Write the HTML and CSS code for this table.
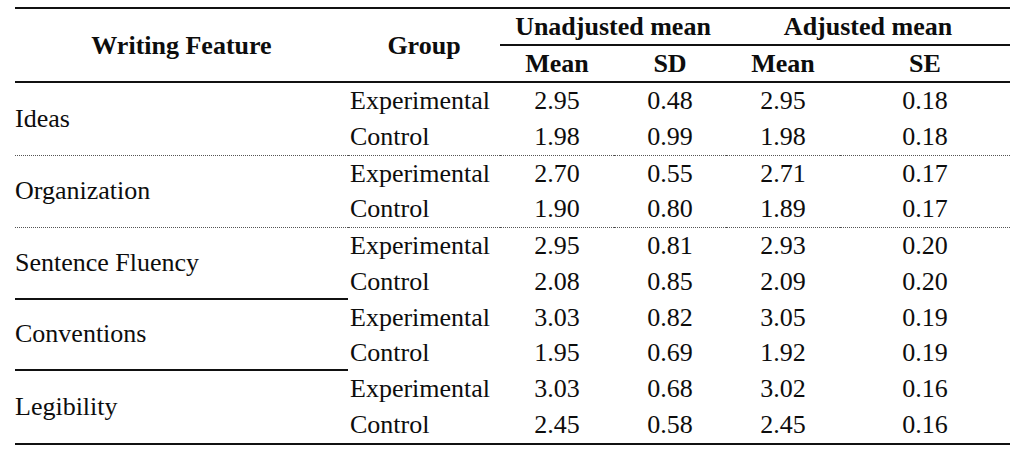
FILE: index.html
```html
<!DOCTYPE html>
<html lang="en">
<head>
<meta charset="utf-8">
<title>Writing Feature Means</title>
<link rel="stylesheet" href="styles.css">
</head>
<body>
<div class="wrap">
<table class="stats">
  <colgroup>
    <col class="c-feat">
    <col class="c-group">
    <col class="c-mean1">
    <col class="c-sd">
    <col class="c-mean2">
    <col class="c-se">
  </colgroup>
  <thead>
    <tr class="hrow1">
      <th rowspan="2" class="hspan">Writing Feature</th>
      <th rowspan="2" class="hspan">Group</th>
      <th colspan="2" class="hgroup">Unadjusted mean</th>
      <th colspan="2" class="hgroup">Adjusted mean</th>
    </tr>
    <tr class="hrow2">
      <th class="hsub">Mean</th>
      <th class="hsub">SD</th>
      <th class="hsub">Mean</th>
      <th class="hsub">SE</th>
    </tr>
  </thead>
  <tbody>
    <tr>
      <td rowspan="2" class="feat sep-dot">Ideas</td>
      <td class="grp">Experimental</td><td>2.95</td><td>0.48</td><td>2.95</td><td>0.18</td>
    </tr>
    <tr class="dot">
      <td class="grp">Control</td><td>1.98</td><td>0.99</td><td>1.98</td><td>0.18</td>
    </tr>
    <tr>
      <td rowspan="2" class="feat sep-dot">Organization</td>
      <td class="grp">Experimental</td><td>2.70</td><td>0.55</td><td>2.71</td><td>0.17</td>
    </tr>
    <tr class="dot">
      <td class="grp">Control</td><td>1.90</td><td>0.80</td><td>1.89</td><td>0.17</td>
    </tr>
    <tr>
      <td rowspan="2" class="feat sep-solid">Sentence Fluency</td>
      <td class="grp">Experimental</td><td>2.95</td><td>0.81</td><td>2.93</td><td>0.20</td>
    </tr>
    <tr>
      <td class="grp">Control</td><td>2.08</td><td>0.85</td><td>2.09</td><td>0.20</td>
    </tr>
    <tr>
      <td rowspan="2" class="feat sep-solid">Conventions</td>
      <td class="grp">Experimental</td><td>3.03</td><td>0.82</td><td>3.05</td><td>0.19</td>
    </tr>
    <tr>
      <td class="grp">Control</td><td>1.95</td><td>0.69</td><td>1.92</td><td>0.19</td>
    </tr>
    <tr>
      <td rowspan="2" class="feat">Legibility</td>
      <td class="grp">Experimental</td><td>3.03</td><td>0.68</td><td>3.02</td><td>0.16</td>
    </tr>
    <tr>
      <td class="grp">Control</td><td>2.45</td><td>0.58</td><td>2.45</td><td>0.16</td>
    </tr>
  </tbody>
</table>
</div>
</body>
</html>
```

FILE: styles.css
```css
html, body {
  margin: 0;
  padding: 0;
  background: #ffffff;
}

body {
  font-family: "Liberation Serif", Tinos, "Times New Roman", Times, "Noto Serif", "DejaVu Serif", serif;
  color: #0d0d0d;
}

.wrap {
  padding: 7px 0 0 15px;
}

.stats {
  border-collapse: separate;
  border-spacing: 0;
  table-layout: fixed;
  width: 995px;
  font-family: inherit;
  font-size: 26px;
  border-top: 2px solid #111;
  border-bottom: 2px solid #111;
}

.c-feat { width: 333px; }
.c-group { width: 152px; }
.c-mean1 { width: 114px; }
.c-sd { width: 112px; }
.c-mean2 { width: 114px; }
.c-se { width: 170px; }

.stats th {
  padding: 0;
  font-weight: bold;
  text-align: center;
  vertical-align: middle;
  line-height: 35px;
}

.stats .hspan,
.stats .hgroup,
.stats .hsub {
  border-bottom: 2px solid #111;
}

.stats td {
  padding: 0;
  text-align: center;
  vertical-align: middle;
  line-height: 35.75px;
}

.stats td.feat {
  text-align: left;
}

.stats td.grp {
  text-align: left;
  padding-left: 2px;
}

.stats tr.dot td,
.stats td.sep-dot {
  border-bottom: 1px dotted #555;
}

.stats td.sep-solid {
  border-bottom: 2px solid #111;
}
```
